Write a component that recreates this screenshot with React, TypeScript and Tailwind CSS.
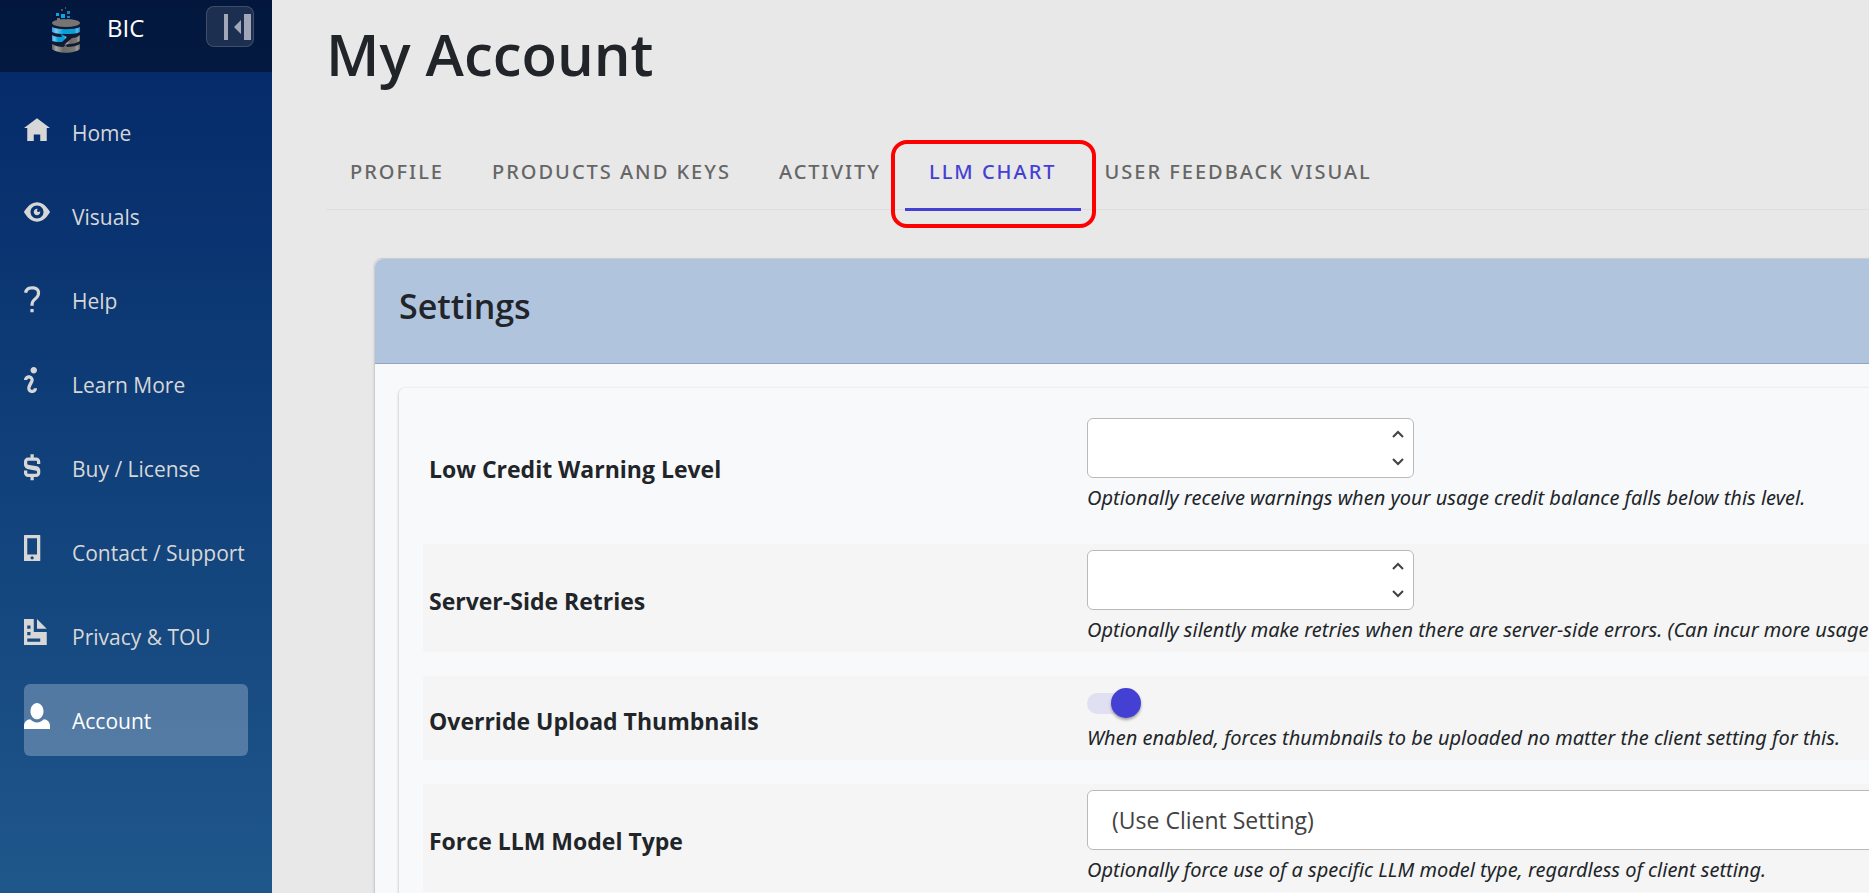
import { useState } from "react"
import type { ReactNode } from "react"

type NavItem = {
  label: string
  path: string
  low?: boolean // glyph sits one unit lower in its box
}

const navItems: NavItem[] = [
  { label: "Home", path: "M4 0l-4 3h1v4h2v-2h2v2h2v-4h1l-4-3z", low: true },
  {
    label: "Visuals",
    path: "M4.03 0c-2.53 0-4.03 3-4.03 3s1.5 3 4.03 3c2.47 0 3.97-3 3.97-3s-1.5-3-3.97-3zm-.03 1c1.11 0 2 .9 2 2 0 1.11-.89 2-2 2-1.1 0-2-.89-2-2 0-1.1.9-2 2-2zm0 1c-.55 0-1 .45-1 1s.45 1 1 1 1-.45 1-1c0-.1-.04-.19-.06-.28-.08.16-.24.28-.44.28-.28 0-.5-.22-.5-.5 0-.2.12-.36.28-.44-.09-.03-.18-.06-.28-.06z",
    low: true,
  },
  {
    label: "Help",
    path: "M2.47 0c-.85 0-1.48.26-1.88.66-.4.4-.54.9-.59 1.28l1 .13c.04-.25.12-.5.31-.69.19-.19.49-.38 1.16-.38.66 0 1.02.16 1.22.34.2.18.28.4.28.66 0 .83-.34 1.06-.84 1.5-.5.44-1.16 1.08-1.16 2.25v.25h1v-.25c0-.83.31-1.06.81-1.5.5-.44 1.19-1.08 1.19-2.25 0-.48-.17-1.02-.59-1.41-.43-.39-1.07-.59-1.91-.59zm-.5 7v1h1v-1h-1z",
    low: true,
  },
  {
    label: "Learn More",
    path: "M3 0c-.55 0-1 .45-1 1s.45 1 1 1 1-.45 1-1-.45-1-1-1zm-1.5 2.5c-.83 0-1.5.67-1.5 1.5h1c0-.28.22-.5.5-.5s.5.22.5.5-1 1.64-1 2.5c0 .86.67 1.5 1.5 1.5s1.5-.67 1.5-1.5h-1c0 .28-.22.5-.5.5s-.5-.22-.5-.5c0-.36 1-1.84 1-2.5 0-.81-.67-1.5-1.5-1.5z",
  },
  {
    label: "Buy / License",
    path: "M2 0v1h-.75C.56 1 0 1.56 0 2.25v1c0 .57.44 1.11 1 1.25l2.78.56c.13.03.22.14.22.28v.41c0 .14-.11.25-.25.25h-2.5C1.11 6 1 5.89 1 5.75V5H0v.75C0 6.44.56 7 1.25 7H2v1h1V7h.75C4.44 7 5 6.44 5 5.75v-.81c0-.57-.44-1.1-1-1.25L1.22 3.2C1.1 3.17 1 3.06 1 2.92v-.67C1 2.11 1.11 2 1.25 2h2.5c.14 0 .25.11.25.25V3h1v-.75C5 1.56 4.44 1 3.75 1H3V0H2z",
    low: true,
  },
  {
    label: "Contact / Support",
    path: "M.19 0c-.11 0-.19.08-.19.19v7.63c0 .11.08.19.19.19h4.63c.11 0 .19-.08.19-.19v-7.63c0-.11-.08-.19-.19-.19h-4.63zm.81 1h3v5h-3v-5zm1.5 5.5c.28 0 .5.22.5.5s-.22.5-.5.5-.5-.22-.5-.5.22-.5.5-.5z",
  },
  {
    label: "Privacy & TOU",
    path: "M0 0v8h7v-4h-4v-4h-3zm4 0v3h3l-3-3zm-3 2h1v1h-1v-1zm0 2h1v1h-1v-1zm0 2h4v1h-4v-1z",
  },
  {
    label: "Account",
    path: "M4 0c-1.1 0-2 1.12-2 2.5s.9 2.5 2 2.5 2-1.12 2-2.5-.9-2.5-2-2.5zm-2.09 5c-1.06.05-1.91.92-1.91 2v1h8v-1c0-1.08-.84-1.95-1.91-2-.54.61-1.28 1-2.09 1-.81 0-1.55-.39-2.09-1z",
  },
]

const tabs = ["Profile", "Products and Keys", "Activity", "LLM Chart", "User Feedback Visual"]

function Logo() {
  return (
    <svg width="30" height="46" viewBox="0 0 30 46" aria-hidden="true">
      <defs>
        <linearGradient id="steel" x1="0" x2="1" y1="0" y2="0">
          <stop offset="0" stopColor="#5f5f60" />
          <stop offset=".15" stopColor="#a8a6a4" />
          <stop offset=".4" stopColor="#6d6a68" />
          <stop offset=".8" stopColor="#7b7978" />
          <stop offset=".9" stopColor="#a09e9c" />
          <stop offset="1" stopColor="#5d5d60" />
        </linearGradient>
        <linearGradient id="glow" x1="0" x2="1" y1="0" y2="0">
          <stop offset="0" stopColor="#2c9be0" />
          <stop offset=".15" stopColor="#7cc6f2" />
          <stop offset=".4" stopColor="#069fd8" />
          <stop offset=".8" stopColor="#0c9fd8" />
          <stop offset=".9" stopColor="#5cbcec" />
          <stop offset="1" stopColor="#1580bd" />
        </linearGradient>
      </defs>
      <path d="M1 16v26c6 5 22 5 28 0V16z" fill="#101a33" />
      <ellipse cx="15" cy="16" rx="14" ry="4" fill="#777473" />
      <path d="M6 11h3v4H6zM10 13h5v3h-5z" fill="#777473" />
      <path d="M1 20c6 3 22 3 28 0v5c-4 2-9 2-14 2-5 0-10 0-14-2z" fill="url(#glow)" />
      <path d="M1 28c3 2 7 2 10 2l-1-3 6 3-5 5c-4 0-7 0-10-1z" fill="url(#glow)" />
      <path d="M29 28v6c-3 2-7 3-11 3l-5 1 8-7c3 0 6-1 8-3z" fill="url(#steel)" />
      <path d="M1 37c3 2 7 3 11 3l3-2 1 2c5 0 10-1 13-3v5c-6 5-22 5-28 0z" fill="url(#steel)" />
      <path d="M10 7h4v4h-4zM5 6h3v3H5z" fill="#0aa5df" />
      <path d="M16 4h3v3h-3zM16 9h3v2h-3z" fill="#1685ba" />
      <path d="M10 2h2v2h-2zM14 0h1v2h-1zM14 12h2v1h-2z" fill="#4b5866" />
    </svg>
  )
}

function Sidebar() {
  return (
    <aside className="w-[272px] shrink-0 bg-linear-to-b from-[#052767] to-[#1f578b]">
      <div className="flex h-[72px] items-start bg-black/40 pr-[18px] pl-[51px]">
        <span className="mt-[7px]">
          <Logo />
        </span>
        <a href="#" className="mt-[10px] ml-[26px] text-2xl leading-9 text-white">
          BIC
        </a>
        <button
          type="button"
          aria-label="Collapse menu"
          className="mt-[6px] ml-auto flex h-[41px] w-12 items-center justify-end rounded-lg border border-white/15 bg-white/10 pr-[2px]"
        >
          <svg width="27" height="26" viewBox="0 0 27 26" fill="#a1a7b6" aria-hidden="true">
            <path d="M0 0h4v26H0zM17 6v14l-7-7zM20 0h7v26h-7z" />
          </svg>
        </button>
      </div>

      <nav className="flex flex-col gap-3 p-6">
        {navItems.map(item => (
          <a
            key={item.label}
            href="#"
            className={
              item.label === "Account"
                ? "flex h-[72px] rounded-md bg-white/25 text-white"
                : "flex h-[72px] rounded-md text-[#d7d7d7]"
            }
          >
            <svg
              width="26"
              height="26"
              viewBox={item.low ? "0 -1 8 8" : "0 0 8 8"}
              fill="currentColor"
              className="mt-[19px] mr-[22px] shrink-0 overflow-visible"
              aria-hidden="true"
            >
              <path d={item.path} fillRule="evenodd" />
            </svg>
            <span className="mt-[3px] text-[21px] leading-[68px] whitespace-nowrap">{item.label}</span>
          </a>
        ))}
      </nav>
    </aside>
  )
}

function NumberField({ id }: { id: string }) {
  const [value, setValue] = useState("")

  const step = (amount: number) => {
    setValue(prev => String(Number(prev) + amount))
  }

  return (
    <div className="flex h-[60px] w-[327px] rounded-md border border-[#bababa] bg-white">
      <input
        id={id}
        type="text"
        inputMode="numeric"
        className="min-w-0 flex-1 px-6 text-2xl text-[#424242] outline-none"
        value={value}
        onChange={e => setValue(e.target.value)}
      />
      <div className="flex w-[30px] flex-col items-center justify-center gap-1 text-[#424242]">
        <button type="button" aria-label="Increase" className="flex h-6 items-center" onClick={() => step(1)}>
          <svg width="12" height="8" viewBox="0 0 12 8" fill="none" stroke="currentColor" strokeWidth="2">
            <path d="M1 7l5-5 5 5" />
          </svg>
        </button>
        <button type="button" aria-label="Decrease" className="flex h-6 items-center" onClick={() => step(-1)}>
          <svg width="12" height="8" viewBox="0 0 12 8" fill="none" stroke="currentColor" strokeWidth="2">
            <path d="M1 1l5 5 5-5" />
          </svg>
        </button>
      </div>
    </div>
  )
}

function SettingRow({
  id,
  label,
  help,
  shaded,
  children,
}: {
  id: string
  label: string
  help: string
  shaded?: boolean
  children: ReactNode
}) {
  return (
    <div className={shaded ? "flex items-center bg-[#f5f5f5] p-[6px]" : "flex items-center p-[6px]"}>
      <label htmlFor={id} className="w-[658px] shrink-0 pt-1.5 text-[23px] leading-9 font-bold">
        {label}
      </label>
      <div className="flex-1">
        {children}
        <p className="pt-1 font-['Noto_Sans','Open_Sans',sans-serif] text-[20px] leading-8 whitespace-nowrap italic">
          {help}
        </p>
      </div>
    </div>
  )
}

export default function App() {
  const [activeTab, setActiveTab] = useState("LLM Chart")
  const [override, setOverride] = useState(true)

  return (
    <div className="flex h-screen overflow-hidden bg-[#e8e8e8] font-['Open_Sans','Noto_Sans',sans-serif] text-[#212529]">
      <Sidebar />

      <main className="min-w-0 flex-1 overflow-hidden pl-[54px]">
        <h1 className="pt-[18px] text-[58px] leading-[72px] font-semibold">My Account</h1>

        <div
          role="tablist"
          className="mt-[46px] flex h-[74px] border-b border-[#dedede] font-['Noto_Sans','Open_Sans',sans-serif]"
        >
          {tabs.map(tab => (
            <button
              key={tab}
              type="button"
              role="tab"
              aria-selected={tab === activeTab}
              onClick={() => setActiveTab(tab)}
              className={
                tab === activeTab
                  ? "relative h-[75px] border-b-[3px] border-[#4540d4] px-6 text-xl font-medium tracking-widest text-[#4540d4] uppercase"
                  : "relative h-[75px] border-b-[3px] border-transparent px-6 text-xl font-medium tracking-widest text-[#666666] uppercase"
              }
            >
              {tab}
              {tab === "LLM Chart" && (
                <span className="pointer-events-none absolute top-1 -right-[15px] -bottom-5 -left-[14px] rounded-2xl border-4 border-[#ff0000]" />
              )}
            </button>
          ))}
        </div>

        {/* the card runs past the right edge of the window */}
        <section className="mt-12 -mr-24 ml-12 rounded-lg border border-[#cccccc] bg-[#f8f9fb] shadow-sm">
          <header className="h-[105px] rounded-t-lg border-b border-[#8fa5c2] bg-[#b0c4de] px-6 pt-[23px]">
            <h2 className="text-[34px] leading-[48px] font-semibold">Settings</h2>
          </header>

          <div className="p-6">
            <div className="flex flex-col gap-6 rounded-md p-6 shadow-[0_1px_3px_rgba(0,0,0,0.3)]">
              <SettingRow
                id="low-credit"
                label="Low Credit Warning Level"
                help="Optionally receive warnings when your usage credit balance falls below this level."
              >
                <NumberField id="low-credit" />
              </SettingRow>

              <SettingRow
                id="retries"
                label="Server-Side Retries"
                help="Optionally silently make retries when there are server-side errors. (Can incur more usage"
                shaded
              >
                <NumberField id="retries" />
              </SettingRow>

              <SettingRow
                id="override"
                label="Override Upload Thumbnails"
                help="When enabled, forces thumbnails to be uploaded no matter the client setting for this."
                shaded
              >
                <div className="flex h-9 items-end">
                  <span className="relative flex h-[30px] w-[54px] items-center">
                    <input
                      id="override"
                      type="checkbox"
                      role="switch"
                      checked={override}
                      onChange={e => setOverride(e.target.checked)}
                      className="peer h-[21px] w-12 appearance-none rounded-full bg-[#d5d5d5] checked:bg-[#e1dff2]"
                    />
                    <span className="pointer-events-none absolute top-0 left-0 size-[30px] rounded-full bg-white shadow-[0_2px_3px_rgba(0,0,0,0.35)] peer-checked:left-6 peer-checked:bg-[#4540d4]" />
                  </span>
                </div>
              </SettingRow>

              <SettingRow
                id="model-type"
                label="Force LLM Model Type"
                help="Optionally force use of a specific LLM model type, regardless of client setting."
                shaded
              >
                <select
                  id="model-type"
                  className="block h-[60px] w-full appearance-none rounded-md border border-[#bababa] bg-white px-6 text-[23px] text-[#424242]"
                >
                  <option>(Use Client Setting)</option>
                </select>
              </SettingRow>
            </div>
          </div>
        </section>
      </main>
    </div>
  )
}
